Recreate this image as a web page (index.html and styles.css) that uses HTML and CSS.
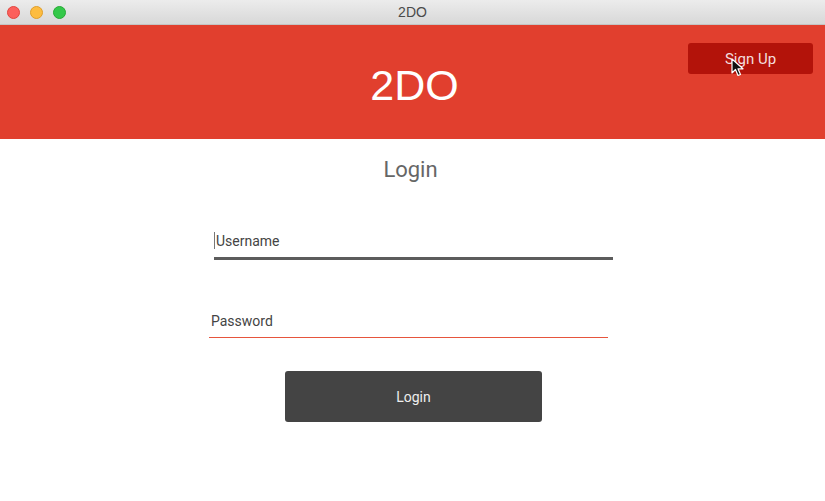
FILE: index.html
```html
<!DOCTYPE html>
<html>
<head>
<meta charset="utf-8">
<link rel="stylesheet" href="styles.css">
</head>
<body>
<div class="window">
  <div class="titlebar">
    <div class="lights">
      <span class="light red"></span>
      <span class="light yellow"></span>
      <span class="light green"></span>
    </div>
    <div class="title">2DO</div>
  </div>
  <header class="header">
    <h1 class="brand">2DO</h1>
    <button class="signup">Sign Up</button>
    <svg class="pointer" width="14" height="20" viewBox="0 0 14 20">
      <path d="M1 1 L1 15 L4.5 11.5 L7 17.5 L9.5 16.5 L7 10.8 L12 10.8 Z" fill="#111" stroke="#fff" stroke-width="1.2" stroke-linejoin="round"/>
    </svg>
  </header>
  <main class="content">
    <h2 class="heading">Login</h2>
    <div class="field field-user">
      <span class="caret"></span><span class="label">Username</span>
    </div>
    <div class="field field-pass">
      <span class="label">Password</span>
    </div>
    <button class="login">Login</button>
  </main>
</div>
</body>
</html>
```
FILE: styles.css
```css
* { box-sizing: border-box; }
html, body { margin: 0; padding: 0; background: #fff; }
body { font-family: Roboto, "Liberation Sans", sans-serif; width: 825px; height: 501px; overflow: hidden; }

.window { display: flex; flex-direction: column; height: 501px; }

.titlebar {
  height: 25px;
  background: linear-gradient(#ececec, #d8d8d8);
  border-bottom: 1px solid #c4c4c4;
  display: flex;
  align-items: center;
  position: relative;
  flex: none;
}
.lights { display: flex; gap: 10px; padding-left: 7px; }
.light { width: 13px; height: 13px; border-radius: 50%; display: block; }
.red { background: #fc605c; border: 1px solid #e2463f; }
.yellow { background: #fdbc40; border: 1px solid #e09e2a; }
.green { background: #34c84a; border: 1px solid #27aa35; }
.title {
  position: absolute; left: 0; right: 0; top: 0; bottom: 0;
  display: flex; align-items: center; justify-content: center;
  font-family: "Liberation Sans", sans-serif; font-size: 14px; color: #4a4a4a;
}

.header {
  height: 114px;
  background: #e13f2e;
  position: relative;
  flex: none;
  display: flex;
  justify-content: center;
  align-items: flex-start;
}
.brand {
  margin: 34px 0 0;
  font-family: "Liberation Sans", sans-serif;
  font-weight: normal;
  font-size: 43px;
  color: #fff;
  line-height: 52px;
  position: relative; left: 2px;
}
.signup {
  position: absolute;
  left: 688px; top: 18px;
  width: 125px; height: 31px;
  background: #b3130a;
  border: none;
  border-radius: 3px;
  color: #f4dede;
  font-family: Roboto, sans-serif;
  font-size: 15px;
  padding: 0;
}
.pointer { position: absolute; left: 731px; top: 33px; }

.content {
  display: flex;
  flex-direction: column;
  align-items: center;
}
.heading {
  margin: 19px 0 0;
  font-weight: normal;
  font-size: 22px;
  color: #666;
  line-height: 24px;
  position: relative; left: -2px;
}
.field {
  width: 399px;
  display: flex;
  align-items: center;
  font-size: 14px;
  color: #444;
}
.field-user {
  margin: 48px 0 0 0;
  position: relative; left: 1px;
  height: 30px;
  border-bottom: 3px solid #5c5c5c;
  padding-bottom: 6px;
}
.caret { width: 1px; height: 17px; background: #777; margin-right: 1px; }
.field-pass {
  margin-top: 50px;
  position: relative; left: -4px;
  height: 28px;
  padding: 0 0 6px 2px;
}
.field-pass::after {
  content: "";
  position: absolute;
  left: 0; right: 0; bottom: 0;
  height: 1px;
  background: #e6553d;
}
.login {
  margin-top: 33px;
  width: 257px; height: 51px;
  background: #444;
  border: none;
  border-radius: 3px;
  color: #eee;
  font-family: Roboto, sans-serif;
  font-size: 14px;
  position: relative; left: 1px;
}
```
